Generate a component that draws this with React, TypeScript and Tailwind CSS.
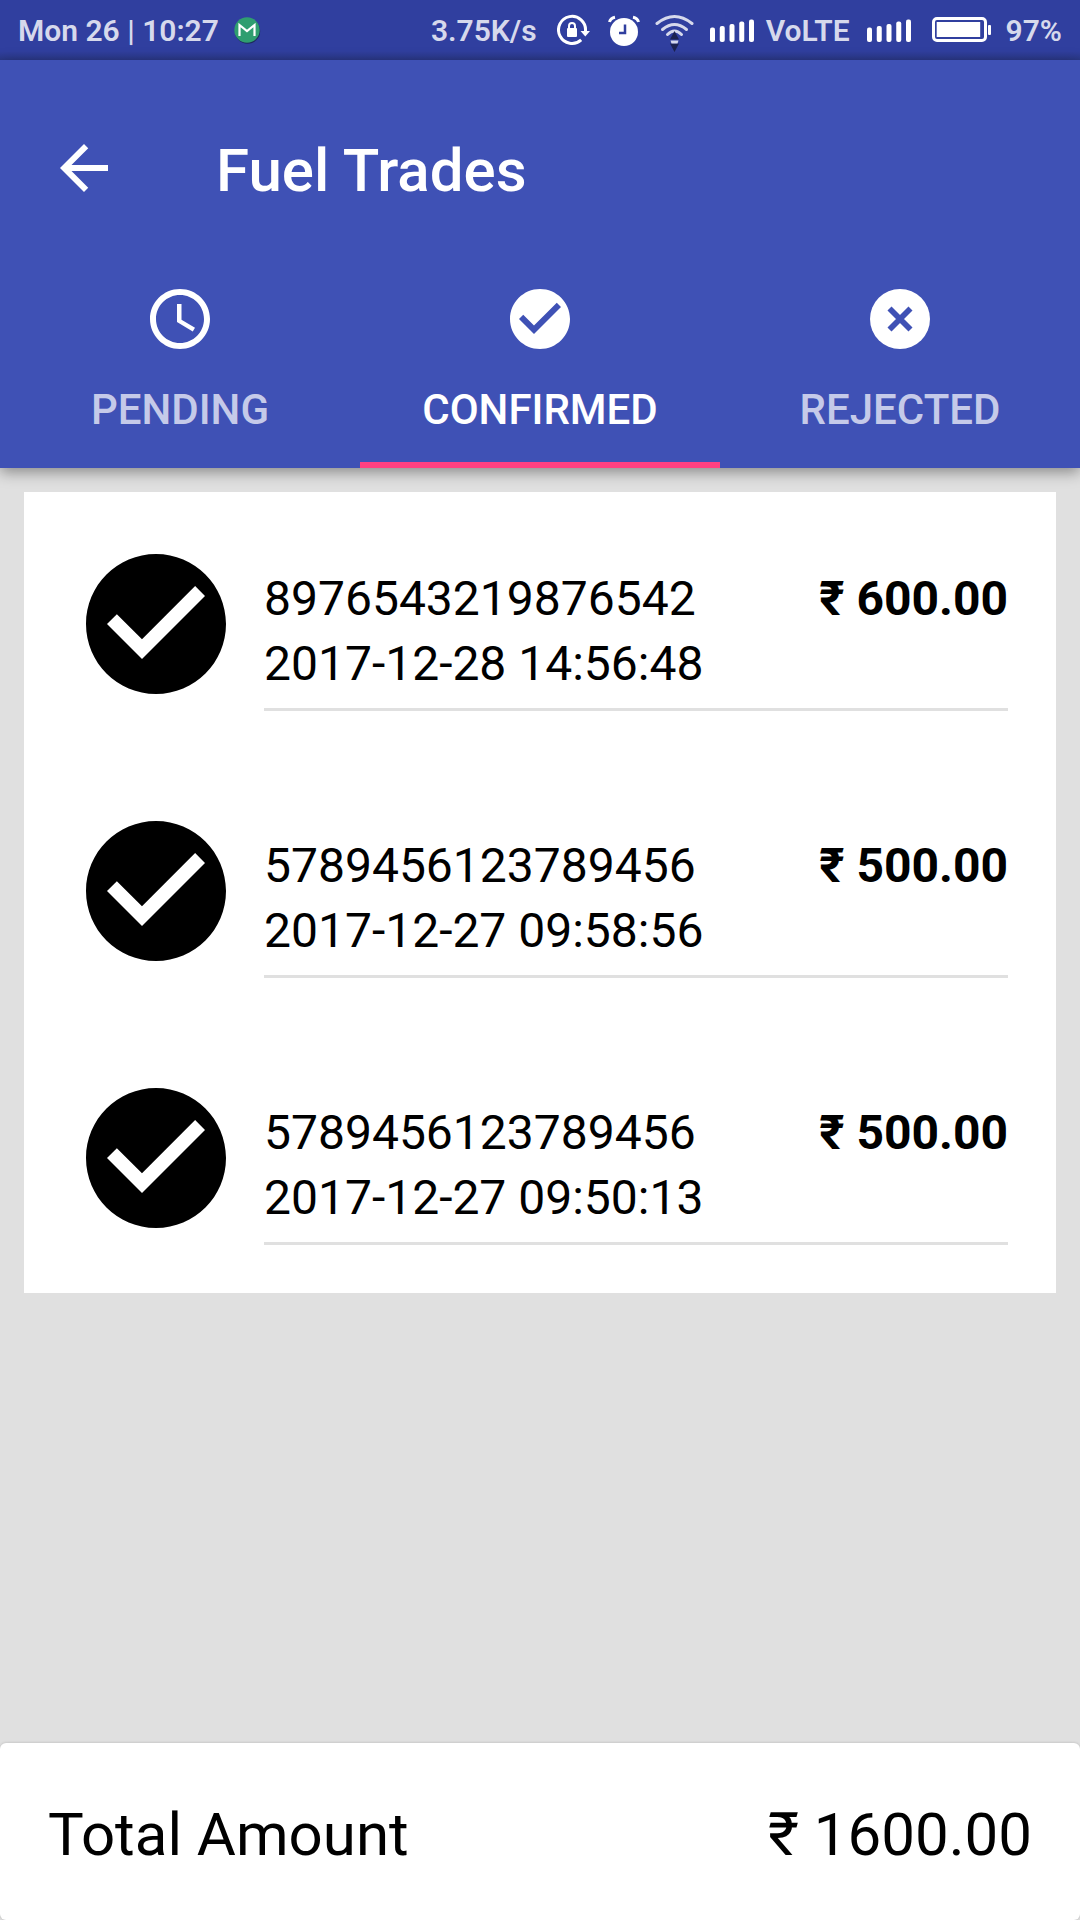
import type { ReactNode } from "react";

const CHECK_CIRCLE =
  "M12 2C6.48 2 2 6.48 2 12s4.48 10 10 10 10-4.48 10-10S17.52 2 12 2zm-2 15l-5-5 1.41-1.41L10 14.17l7.59-7.59L19 8l-9 9z";

function SignalBars({ className }: { className: string }) {
  const tops = [27.5, 26, 24, 21.5, 19.5];
  return (
    <svg viewBox="0 0 44 60" className={`h-15 w-11 ${className}`} fill="#fff" aria-hidden="true">
      {tops.map((top, i) => (
        <rect key={top} x={i * 9.75} y={top} width="5" height={42 - top} rx="2" />
      ))}
    </svg>
  );
}

function StatusBar() {
  return (
    <div className="flex h-15 items-center bg-[#303f9f] bg-linear-to-t from-[#2b3989] to-[#303f9f] to-15% px-[18px] text-[30px] leading-9 font-semibold whitespace-nowrap text-[#d6d9ec]">
      <span className="pt-0.5">Mon 26 | 10:27</span>
      <svg viewBox="0 0 28 60" className="ml-3.5 h-15 w-7" aria-hidden="true">
        <circle cx="14.5" cy="31" r="12.7" fill="#1c2a5c" />
        <circle cx="14" cy="30" r="12.7" fill="#2f9e70" />
        <path d="M6.500 36V25l7.500 6 7.500-6V36" fill="none" stroke="#fff" strokeWidth="2.2" />
      </svg>
      <span className="ml-auto pt-0.5">3.75K/s</span>
      <svg viewBox="0 0 33 60" className="ml-5 h-15 w-[33px]" aria-hidden="true">
        <path d="M24.2 39.8A13.5 13.5 0 1 1 28.5 31" fill="none" stroke="#fff" strokeWidth="3" />
        <path d="M23.500 31H33l-4.700 5.500z" fill="#fff" />
        <rect x="10" y="28" width="10" height="9" rx="1" fill="#fff" />
        <path d="M12 29v-3a3 3 0 0 1 6 0v3" fill="none" stroke="#fff" strokeWidth="2" />
      </svg>
      <svg viewBox="0 0 32 60" className="ml-[18px] h-15 w-8" aria-hidden="true">
        <circle cx="16" cy="32" r="14" fill="#fff" />
        <path d="M17 24.500V33h-6" fill="none" stroke="#303f9f" strokeWidth="2.500" />
        <path d="M1.500 22Q2.500 18 7 17.200M30.500 22Q29.500 18 25 17.200" fill="none" stroke="#fff" strokeWidth="3" />
      </svg>
      <svg viewBox="0 0 39 60" className="ml-[15px] h-15 w-[39px]" aria-hidden="true">
        <g fill="none" stroke="#d6d9ec" strokeWidth="3" strokeLinecap="round">
          <path d="M2 23.500Q19.500 9.500 37 23.500" />
          <path d="M7.500 29.500Q19.500 19.500 31.500 29.500" />
          <path d="M12.500 34.500Q19.500 27.500 26.500 34.500" />
        </g>
        <path d="M19.500 31l4.500 8.500h-9zM19.500 52l4.500-8.500h-9z" fill="#1c2350" />
        <path d="M15.500 40.500h8l-1 3h-6z" fill="#d6d9ec" />
      </svg>
      <SignalBars className="ml-4" />
      <span className="ml-3 pt-0.5">VoLTE</span>
      <SignalBars className="ml-[17px]" />
      <svg viewBox="0 0 59 60" className="ml-[21px] h-15 w-[59px]" aria-hidden="true">
        <rect x="1.500" y="18.500" width="52" height="22" rx="3.500" fill="none" stroke="#fff" strokeWidth="3" />
        <rect x="4.700" y="22" width="43.500" height="15" fill="#fff" />
        <rect x="56" y="25" width="3" height="10" rx="1" fill="#fff" />
      </svg>
      <span className="ml-[15px] pt-0.5">97%</span>
    </div>
  );
}

function Tab({ label, selected = false, children }: { label: string; selected?: boolean; children: ReactNode }) {
  return (
    <button
      type="button"
      role="tab"
      aria-selected={selected}
      className={`flex h-54 flex-1 flex-col items-center border-b-6 pt-[31px] ${
        selected ? "border-[#ff4081] text-white" : "border-transparent text-[#c5cae9]"
      }`}
    >
      <svg viewBox="0 0 24 24" className="size-18 shrink-0" fill="#fff" aria-hidden="true">
        {children}
      </svg>
      <span className="mt-[30px] text-[42px] leading-[50px] font-medium">{label}</span>
    </button>
  );
}

type Trade = { id: string; time: string; amount: string };

const trades: Trade[] = [
  { id: "8976543219876542", time: "2017-12-28 14:56:48", amount: "₹ 600.00" },
  { id: "5789456123789456", time: "2017-12-27 09:58:56", amount: "₹ 500.00" },
  { id: "5789456123789456", time: "2017-12-27 09:50:13", amount: "₹ 500.00" },
];

function TradeRow({ trade }: { trade: Trade }) {
  return (
    <li className="flex gap-6 p-12">
      <svg viewBox="0 0 24 24" className="size-42 shrink-0" aria-hidden="true">
        <path d={CHECK_CIRCLE} />
      </svg>
      <div className="flex flex-1 justify-between border-b-3 border-[#e0e0e0] pt-[26px] pb-3 text-[48px] leading-[65px]">
        <div>
          <p>{trade.id}</p>
          <p>{trade.time}</p>
        </div>
        <p className="font-bold">{trade.amount}</p>
      </div>
    </li>
  );
}

export default function App() {
  return (
    <div className="flex min-h-screen flex-col bg-[#e0e0e0] font-[Roboto,sans-serif] text-black">
      <StatusBar />
      <header className="bg-[#3f51b5] pt-6 text-white shadow-[0_4px_14px_rgba(0,0,0,0.4)]">
        <div className="flex h-42 items-center gap-24 px-12">
          <button type="button" aria-label="Back">
            <svg viewBox="0 0 24 24" className="size-18" fill="currentColor" aria-hidden="true">
              <path d="M20 11H7.830l5.590-5.590L12 4l-8 8 8 8 1.410-1.410L7.830 13H20v-2z" />
            </svg>
          </button>
          <h1 className="pt-1.5 text-[60px] leading-18 font-medium">Fuel Trades</h1>
        </div>
        <div role="tablist" className="flex">
          <Tab label="PENDING">
            <path d="M11.990 2C6.470 2 2 6.480 2 12s4.470 10 9.990 10C17.520 22 22 17.520 22 12S17.520 2 11.990 2zM12 20c-4.420 0-8-3.580-8-8s3.580-8 8-8 8 3.580 8 8-3.580 8-8 8z" />
            <path d="M12.500 7H11v6l5.250 3.150.75-1.230-4.500-2.670z" />
          </Tab>
          <Tab label="CONFIRMED" selected>
            <path d={CHECK_CIRCLE} />
          </Tab>
          <Tab label="REJECTED">
            <circle cx="12" cy="12" r="10" />
            <path d="M8.500 8.500l7 7M15.500 8.500l-7 7" stroke="#3f51b5" strokeWidth="1.900" />
          </Tab>
        </div>
      </header>
      <main className="flex-1 p-6">
        <ul className="bg-white">
          {trades.map((trade) => (
            <TradeRow key={trade.time} trade={trade} />
          ))}
        </ul>
      </main>
      <footer className="flex justify-between rounded-md bg-white px-12 pt-[57px] pb-[50px] text-[60px] leading-[70px] shadow-[0_0_3px_rgba(0,0,0,0.2)]">
        <span>Total Amount</span>
        <span>₹ 1600.00</span>
      </footer>
    </div>
  );
}
